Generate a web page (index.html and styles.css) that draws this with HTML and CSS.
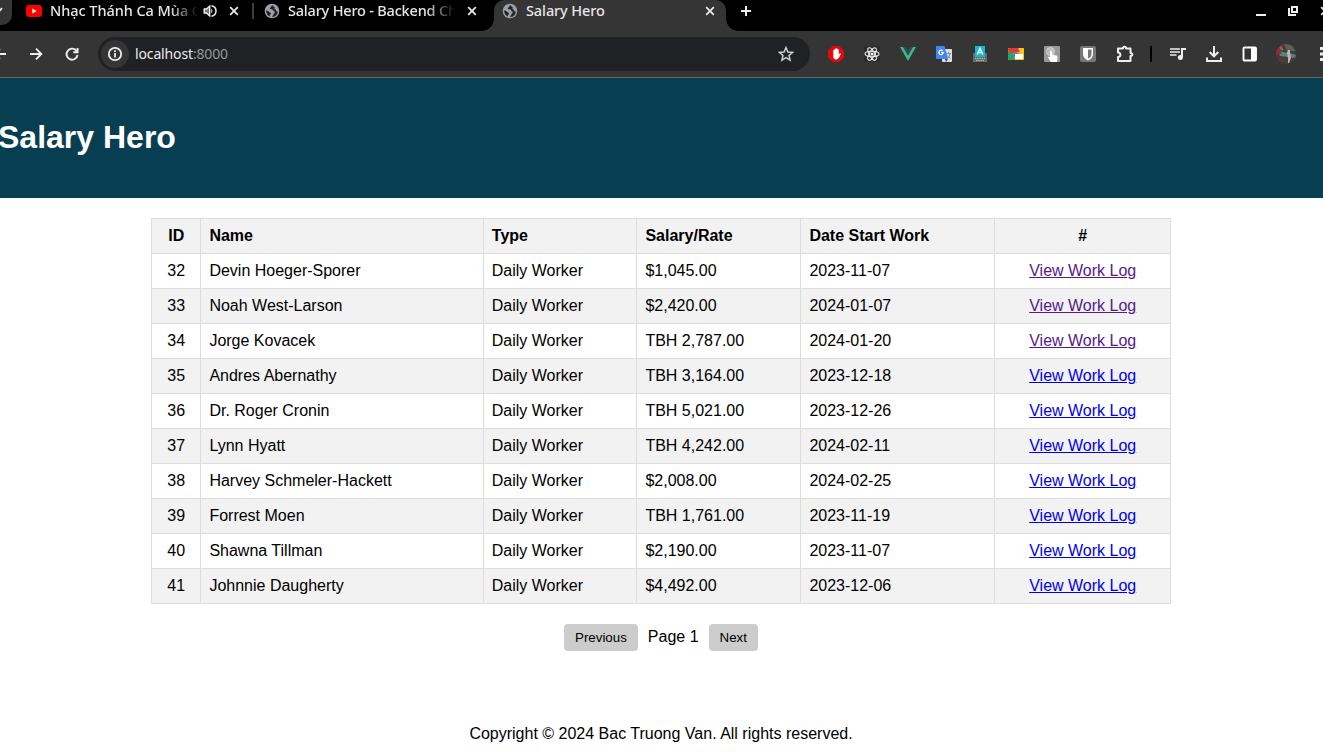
FILE: index.html
```
<!DOCTYPE html>
<html lang="en">
<head>
<meta charset="utf-8">
<title>Salary Hero</title>
<link rel="stylesheet" href="styles.css">
</head>
<body>
<svg class="defs" width="0" height="0">
  <symbol id="globe" viewBox="0 0 16 16"><circle cx="8" cy="8" r="7.3" fill="#9aa0a6"/><path d="M8.6 2.2C7 2.6 7.300 4 6.200 4.800 5.300 5.500 5.900 6.400 7.400 6.300 8.800 6.200 9.300 7 9.200 8 11 8.200 11.300 9.300 10.200 10.400 9 11.600 9.300 12.600 7.600 13.700 11.600 14.200 13.700 11.200 13.700 8.400 12.300 8.500 11.600 7.600 11.700 6.500 10.400 6.200 10 5.200 10.900 4.200 10 3.900 9.300 3.400 8.600 2.200ZM2.300 7.300C2 10 3.300 12.500 5.700 13.400 5.400 12.200 6.800 11.700 6.900 10.600 7 9.400 5.200 9.700 4.700 8.600 4.300 7.800 3.200 7.900 2.300 7.300Z" class="globe-sea"/></symbol>
  <symbol id="close" viewBox="0 0 10 10"><path d="M1.200 1.200 8.800 8.800M8.800 1.200 1.200 8.800" stroke="#e8e8e8" stroke-width="1.800"/></symbol>
</svg>

<div class="tabstrip">
  <div class="tab-search"><svg width="8" height="8" viewBox="0 0 8 8"><path d="M-4 1 -1 4.500 2 1" fill="none" stroke="#e8e8e8" stroke-width="1.800"/></svg></div>
  <div class="tab tab-music">
    <svg class="fav" width="16" height="12" viewBox="0 0 16 12"><rect width="16" height="12" rx="3" fill="#f00"/><path d="M6.300 3.400 10.700 6 6.300 8.600Z" fill="#fff"/></svg>
    <span class="tab-title title-music">Nhạc Thánh Ca Mùa C</span>
    <svg class="speaker" width="14" height="14" viewBox="0 0 14 14"><path d="M1.200 5H3.500L6.700 2V12L3.500 9H1.200Z" fill="#777" stroke="#eee" stroke-width="1.400"/><path d="M8.300 4.500Q10.500 7 8.300 9.500Z" fill="#eee"/><path d="M8.500 1.700C14.500 3 14.500 11 8.500 12.300" fill="none" stroke="#eee" stroke-width="1.500"/></svg>
    <svg width="10" height="10"><use href="#close"/></svg>
  </div>
  <div class="tab tab-backend">
    <svg class="fav" width="16" height="16"><use href="#globe"/></svg>
    <span class="tab-title title-backend">Salary Hero - Backend Ch</span>
    <svg width="10" height="10"><use href="#close"/></svg>
  </div>
  <div class="tab tab-active">
    <svg class="fav" width="16" height="16"><use href="#globe"/></svg>
    <span class="tab-title title-active">Salary Hero</span>
    <svg width="10" height="10"><use href="#close"/></svg>
  </div>
  <svg class="new-tab" width="10" height="10" viewBox="0 0 10 10"><path d="M5 0V10M0 5H10" stroke="#eee" stroke-width="2"/></svg>
  <div class="window-controls">
    <svg width="10" height="10" viewBox="0 0 10 10"><path d="M0 8H10V10H0Z" fill="#eee"/></svg>
    <svg width="10" height="10" viewBox="0 0 10 10"><path d="M4 1H9V6H4ZM1 2V9H8" fill="none" stroke="#eee" stroke-width="2"/></svg>
    <svg width="10" height="10"><use href="#close"/></svg>
  </div>
</div>

<div class="toolbar">
  <div class="slot back"><svg width="16" height="16" viewBox="0 0 16 16"><path d="M14 8H3M8 3 3 8 8 13" fill="none" stroke="#eee" stroke-width="1.800"/></svg></div>
  <div class="slot"><svg width="16" height="16" viewBox="0 0 16 16"><path d="M2 8H13M8 2.700 13.300 8 8 13.300" fill="none" stroke="#eee" stroke-width="1.900"/></svg></div>
  <div class="slot"><svg width="16" height="16" viewBox="0 0 16 16"><path d="M12.700 5.200A5.500 5.500 0 1 0 13.500 9M13.600 2V6.300H9.300" fill="none" stroke="#eee" stroke-width="1.900"/></svg></div>
  <div class="omnibox">
    <div class="site-info"><svg width="16" height="16" viewBox="0 0 16 16"><circle cx="8" cy="8" r="6.200" fill="none" stroke="#eee" stroke-width="1.800"/><path d="M7.100 7H8.900V11.500H7.100ZM7.100 4.300H8.900V6H7.100Z" fill="#eee"/></svg></div>
    <span class="url">localhost<span class="port">:8000</span></span>
    <svg class="star" width="16" height="16" viewBox="0 0 16 16"><path d="M8 1.500 9.900 6 14.600 6.400 11 9.500 12.100 14.200 8 11.700 3.900 14.200 5 9.500 1.400 6.400 6.100 6Z" fill="none" stroke="#ccc" stroke-width="1.500"/></svg>
  </div>
  <div class="slot"><svg width="16" height="16" viewBox="0 0 16 16"><path d="M4.700 0H11.300L16 4.700V11.300L11.300 16H4.700L0 11.300V4.700Z" fill="#e20a0a"/><path d="M5.300 8V4.300Q6 3.500 6.500 4.300V3Q7.300 2.200 7.900 3V2.600Q8.700 1.800 9.300 2.600V3.400Q10.200 2.700 10.700 3.600V8.500L11.700 7.300Q12.800 6.900 12.900 7.900L10.900 11.700Q10 13.400 8 13.400 5.300 13.200 5.300 10.500Z" fill="#fff"/></svg></div>
  <div class="slot"><svg width="16" height="16" viewBox="0 0 16 16"><rect width="16" height="16" fill="#2c2c2c"/><g fill="none" stroke="#eee" stroke-width="1.100"><ellipse cx="8" cy="8" rx="7" ry="2.700"/><ellipse cx="8" cy="8" rx="7" ry="2.700" transform="rotate(60 8 8)"/><ellipse cx="8" cy="8" rx="7" ry="2.700" transform="rotate(120 8 8)"/></g><circle cx="8" cy="8" r="1.500" fill="#fff"/></svg></div>
  <div class="slot"><svg width="16" height="16" viewBox="0 0 16 16"><path d="M0 1H3.200L8 9.500 12.800 1H16L8 15Z" fill="#41b883"/><path d="M3.200 1H6.100L8 4.300 9.900 1H12.800L8 9.500Z" fill="#35495e"/></svg></div>
  <div class="slot"><svg width="16" height="16" viewBox="0 0 16 16"><rect x="6" y="3" width="10" height="13" rx="1" fill="#ddd"/><path d="M10 7.500H15M12.500 6.200V7.500M11 13Q13.500 11 14 7.500M11 9.500 14.500 12.500" fill="none" stroke="#78909c" stroke-width="1"/><path d="M0 0H8.500L12 13H1Q0 13 0 12Z" fill="#4285f4"/><path d="M9 13H12L10 16Z" fill="#3449b5"/><path d="M6.700 5A2.200 2.200 0 1 0 7.200 6.700H5.200" fill="none" stroke="#fff" stroke-width="1.200"/></svg></div>
  <div class="slot"><svg width="16" height="16" viewBox="0 0 16 16"><path d="M1 7H15V16H1Z" fill="#686868"/><path d="M3 12.500H13M4 14.500H12" stroke="#bbb" stroke-width="1.100" stroke-dasharray="1.500 .7"/><rect x="3" width="10" height="11" fill="#16b7d0"/><path d="M5.200 8.500 8 2.200 10.800 8.500M6.300 6.500H9.700" fill="none" stroke="#fff" stroke-width="1.300"/></svg></div>
  <div class="slot"><svg width="16" height="16" viewBox="0 0 16 16"><rect y="2" width="16" height="12" rx="1" fill="#f5c518"/><path d="M0 4 6 9 7 14H1Q0 14 0 13Z" fill="#25a55b"/><path d="M1 2H10L12 6H8L4 8 0 4V3Z" fill="#e33b32"/><path d="M3.500 8.500 8 5.700 12 8 7 11Z" fill="#4285f4"/><rect x="7" y="8" width="8" height="5" fill="#fff"/></svg></div>
  <div class="slot"><svg width="16" height="16" viewBox="0 0 16 16"><rect width="16" height="16" rx="1" fill="#999"/><circle cx="6.500" cy="5.500" r="4" fill="#bcbcbc" stroke="#d0d0d0"/><path d="M6 5Q7 4 8 5V8.500L13 9.700Q14 11 13 16H7L4 11.500Q4 10.300 6 11Z" fill="#fff"/></svg></div>
  <div class="slot"><svg width="16" height="16" viewBox="0 0 16 16"><rect width="16" height="16" rx="2" fill="#777"/><path d="M3 2H13V8Q13 12 8 14.500 3 12 3 8Z" fill="#fff"/><path d="M8 3.500H11.500V8Q11.500 11 8 12.800Z" fill="#777"/></svg></div>
  <div class="slot puzzle"><svg width="18" height="18" viewBox="0 0 18 18"><path d="M2 3.500H7V2.700Q8.500 .600 10 2.700V3.500H14.500V8H15.300Q17.500 9.500 15.300 11H14.500V16H2V12Q4.400 11.800 4.400 9.700 4.400 7.700 2 7.500Z" fill="none" stroke="#eee" stroke-width="2" stroke-linejoin="round"/></svg></div>
  <div class="divider"></div>
  <div class="slot"><svg width="16" height="14" viewBox="0 0 16 14"><path d="M0 2H10M0 5H10M0 8H6.500" stroke="#eee" stroke-width="1.600"/><path d="M12 10.500V2H16" fill="none" stroke="#eee" stroke-width="2"/><circle cx="10.300" cy="10.500" r="2.500" fill="#eee"/></svg></div>
  <div class="slot"><svg width="16" height="16" viewBox="0 0 16 16"><path d="M8 0V10M3.700 6 8 10.300 12.300 6M1 11.500V15H15V11.500" fill="none" stroke="#eee" stroke-width="2"/></svg></div>
  <div class="slot"><svg width="16" height="16" viewBox="0 0 16 16"><rect x="1.500" y="1.500" width="12.500" height="13" rx="1" fill="none" stroke="#fff" stroke-width="1.900"/><path d="M9 1.500H14V14.500H9Z" fill="#fff"/></svg></div>
  <div class="slot"><svg width="20" height="20" viewBox="0 0 20 20"><clipPath id="avatar"><circle cx="10" cy="10" r="10"/></clipPath><g clip-path="url(#avatar)"><rect width="20" height="20" fill="#383f45"/><path d="M0 0H8L5 8 0 11Z" fill="#a82334"/><path d="M8 0H20V7H11Z" fill="#5b6153"/><path d="M3 10 11 8 20 11V14L4 12Z" fill="#66788a"/><path d="M0 12 9 14 8 20H0Z" fill="#563832"/><path d="M4 3 7 6M5 8 9 10" stroke="#4a9c6d" stroke-width="1.500"/><path d="M12 6H14V9L15 14 13 19H12V14L11 9Z" fill="#c6b9a4"/><path d="M15 15H20V20H14Z" fill="#39443d"/></g></svg></div>
  <div class="slot"><svg width="4" height="16" viewBox="0 0 4 16"><path d="M0 1H4V4H0ZM0 6.500H4V9.500H0ZM0 12H4V15H0Z" fill="#eee"/></svg></div>
</div>

<header class="page-header"><h1>Salary Hero</h1></header>
<main>
  <table class="workers">
    <colgroup><col class="c-id"><col class="c-name"><col class="c-type"><col class="c-rate"><col class="c-date"><col class="c-link"></colgroup>
    <thead><tr><th>ID</th><th>Name</th><th>Type</th><th>Salary/Rate</th><th>Date Start Work</th><th>#</th></tr></thead>
    <tbody>
      <tr><td>32</td><td>Devin Hoeger-Sporer</td><td>Daily Worker</td><td>$1,045.00</td><td>2023-11-07</td><td><a class="seen" href="#32">View Work Log</a></td></tr>
      <tr><td>33</td><td>Noah West-Larson</td><td>Daily Worker</td><td>$2,420.00</td><td>2024-01-07</td><td><a class="seen" href="#33">View Work Log</a></td></tr>
      <tr><td>34</td><td>Jorge Kovacek</td><td>Daily Worker</td><td>TBH 2,787.00</td><td>2024-01-20</td><td><a class="seen" href="#34">View Work Log</a></td></tr>
      <tr><td>35</td><td>Andres Abernathy</td><td>Daily Worker</td><td>TBH 3,164.00</td><td>2023-12-18</td><td><a href="#35">View Work Log</a></td></tr>
      <tr><td>36</td><td>Dr. Roger Cronin</td><td>Daily Worker</td><td>TBH 5,021.00</td><td>2023-12-26</td><td><a href="#36">View Work Log</a></td></tr>
      <tr><td>37</td><td>Lynn Hyatt</td><td>Daily Worker</td><td>TBH 4,242.00</td><td>2024-02-11</td><td><a href="#37">View Work Log</a></td></tr>
      <tr><td>38</td><td>Harvey Schmeler-Hackett</td><td>Daily Worker</td><td>$2,008.00</td><td>2024-02-25</td><td><a href="#38">View Work Log</a></td></tr>
      <tr><td>39</td><td>Forrest Moen</td><td>Daily Worker</td><td>TBH 1,761.00</td><td>2023-11-19</td><td><a href="#39">View Work Log</a></td></tr>
      <tr><td>40</td><td>Shawna Tillman</td><td>Daily Worker</td><td>$2,190.00</td><td>2023-11-07</td><td><a href="#40">View Work Log</a></td></tr>
      <tr><td>41</td><td>Johnnie Daugherty</td><td>Daily Worker</td><td>$4,492.00</td><td>2023-12-06</td><td><a href="#41">View Work Log</a></td></tr>
    </tbody>
  </table>
  <div class="pagination"><button>Previous</button><span>Page 1</span><button>Next</button></div>
</main>
<footer>Copyright © 2024 Bac Truong Van. All rights reserved.</footer>
</body>
</html>
```

FILE: styles.css
```
* { box-sizing: border-box; }
html { overflow: hidden; }
body {
  margin: 0;
  width: 1323px;
  height: 752px;
  overflow: hidden;
  background: #fff;
  color: #000;
  font: 16px/18px "Liberation Sans", Arial, sans-serif;
}
svg { display: block; flex: none; }
.defs { position: absolute; }

/* Tab strip */
.tabstrip {
  display: flex;
  height: 31px;
  background: #000;
  color: #e6e6e6;
  font: 500 14.5px/22px "Noto Sans", sans-serif;
  letter-spacing: -0.1px;
  overflow: hidden;
}
.tab-search {
  width: 12px;
  height: 25px;
  padding-top: 7px;
  border-radius: 0 0 10px 0;
  background: #353535;
  overflow: hidden;
}
.tab { display: flex; align-items: center; height: 31px; padding-bottom: 9px; flex: none; }
.tab-title { overflow: hidden; white-space: nowrap; height: 24px; }
.tab-music { width: 242px; padding-left: 14px; background: linear-gradient(#3c3c3c, #3c3c3c) 240px 3px / 2px 16px no-repeat; }
.title-music { width: 148px; margin: 0 5px 0 8px; letter-spacing: -0.05px; -webkit-mask-image: linear-gradient(90deg, #000 120px, transparent); mask-image: linear-gradient(90deg, #000 120px, transparent); }
.speaker { margin-right: 12px; }
.tab-backend { width: 240px; padding-left: 10px; }
.title-backend { width: 167px; margin: 0 12px 0 8px; letter-spacing: -0.2px; -webkit-mask-image: linear-gradient(90deg, #000 138px, transparent); mask-image: linear-gradient(90deg, #000 138px, transparent); }
.tab-active { position: relative; width: 232px; padding-left: 8px; border-radius: 10px 10px 0 0; background: #353535; }
.tab-active::before, .tab-active::after { content: ""; position: absolute; bottom: 0; width: 12px; height: 12px; }
.tab-active::before { left: -12px; background: radial-gradient(circle at 0 0, transparent 11.5px, #353535 12px); }
.tab-active::after { right: -12px; background: radial-gradient(circle at 100% 0, transparent 11.5px, #353535 12px); }
.title-active { width: 171px; margin: 0 8px; }
.globe-sea { fill: #222; }
.new-tab { margin: 6px 0 0 15px; }
.window-controls { display: flex; gap: 22px; margin: 6px -7px 0 auto; }

/* Toolbar */
.toolbar {
  display: flex;
  align-items: center;
  height: 47px;
  background: #353535;
  border-bottom: 1px solid #666;
  overflow: hidden;
}
.slot { display: flex; justify-content: center; flex: none; width: 36px; }
.back { margin-left: -18px; }
.puzzle { padding-left: 2px; }
.omnibox {
  display: flex;
  align-items: center;
  flex: none;
  width: 712px;
  height: 34px;
  margin: 0 8px;
  padding: 0 16px 0 3px;
  border-radius: 17px;
  background: #202124;
}
.site-info { display: flex; align-items: center; justify-content: center; width: 28px; height: 28px; border-radius: 50%; background: #353535; }
.url { margin-left: 6px; color: #e8eaed; font: 14px/20px "Noto Sans", sans-serif; letter-spacing: -0.14px; }
.port { color: #969696; }
.star { margin-left: auto; }
.divider { flex: none; width: 2px; height: 16px; margin: 0 8px; background: #000; }

/* Page */
.page-header { height: 120px; padding-top: 41px; background: #083e51; color: #fff; }
.page-header h1 { margin: 0 0 0 -2px; font-size: 32px; line-height: 37px; }
.workers { width: 1020px; margin: 20px 0 0 151px; border-collapse: collapse; table-layout: fixed; }
.c-id { width: 49px; }
.c-name { width: 283px; }
.c-type { width: 153px; }
.c-rate { width: 164px; }
.c-date { width: 194px; }
.c-link { width: 176px; }
th, td { height: 35px; padding: 8px; border: 1px solid #ddd; text-align: left; line-height: 18px; }
th:nth-child(2), td:nth-child(2), th:nth-child(4), td:nth-child(4), th:nth-child(5), td:nth-child(5) { padding-left: 8.4px; }
th:nth-child(3), td:nth-child(3) { padding-left: 7.8px; }
th:first-child, td:first-child, th:last-child, td:last-child { padding-left: 8.4px; text-align: center; }
th, tr:nth-child(even) td { background: #f2f2f2; }
a { color: #00e; text-decoration: underline; }
a.seen { color: #551a8b; }
.pagination { display: flex; justify-content: center; align-items: flex-start; gap: 10px; padding: 20px 1px 0 0; }
.pagination span { margin-top: 4px; }
.pagination button { height: 27px; padding: 0 11px; border: 0; border-radius: 4px; background: #ccc; color: #000; font: 13.333px "Liberation Sans", Arial, sans-serif; }
footer { margin-top: 74px; padding-right: 1px; text-align: center; }
```
